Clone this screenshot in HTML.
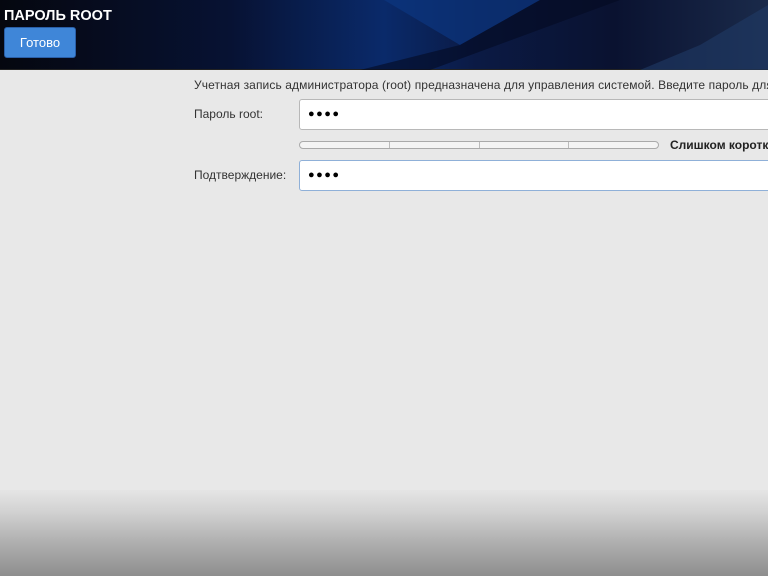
<!DOCTYPE html>
<html><head><meta charset="utf-8"><style>
*{margin:0;padding:0;box-sizing:border-box}
body{width:768px;height:576px;overflow:hidden;position:relative;background:#e8e8e8;font-family:"Liberation Sans","DejaVu Sans",sans-serif}
#hdr{position:absolute;left:0;top:0;width:768px;height:70px;background:linear-gradient(90deg,#05070f 0%,#071233 30%,#0a2a6a 50%,#0b1a44 62%,#0a1230 80%,#1a2a4a 100%);border-bottom:1px solid #222}
#hdr svg{position:absolute;left:0;top:0}
#title{position:absolute;left:4px;top:8px;color:#fff;font-weight:bold;font-size:14.5px}
#btn{position:absolute;left:4px;top:27px;width:72px;height:31px;background:#3f86d8;border:1px solid #2a5fa8;border-radius:3px;color:#fff;font-size:13px;text-align:center;line-height:29px}
.t{position:absolute;font-size:12px;color:#333;white-space:nowrap}
.in{position:absolute;left:299px;width:480px;height:31px;background:#fff;border:1px solid #b8b8b8;border-radius:3px}
.dots{position:absolute;left:8px;top:8px;font-size:11px;letter-spacing:1.5px;color:#000}
#bar{position:absolute;left:299px;top:141px;width:360px;height:8px;border:1px solid #aaa;border-radius:4px;background:#f4f4f4;display:flex}
#bar div{flex:1;border-right:1px solid #bbb}
#foot{position:absolute;left:0;top:490px;width:768px;height:86px;background:linear-gradient(#e5e5e5,#d2d2d2 25%,#b0b0b0 60%,#8e8e8e 100%)}
</style></head><body>
<div id="hdr"><svg width="768" height="70"><polygon points="384,0 540,0 460,45" fill="#0c3680" opacity=".7"/><polygon points="460,45 540,0 620,0 430,70 360,70" fill="#030a22" opacity=".6"/><polygon points="700,45 768,5 768,70 640,70" fill="#1f3a66" opacity=".6"/></svg>
<div id="title">ПАРОЛЬ ROOT</div>
<div id="btn">Готово</div></div>
<div class="t" style="left:194px;top:78px;letter-spacing:0.1px">Учетная запись администратора (root) предназначена для управления системой. Введите пароль для</div>
<div class="t" style="left:194px;top:107px">Пароль root:</div>
<div class="in" style="top:99px"><span class="dots">●●●●</span></div>
<div id="bar"><div></div><div></div><div></div><div style="border:none"></div></div>
<div class="t" style="left:670px;top:138px;font-weight:bold;color:#222">Слишком короткий</div>
<div class="t" style="left:194px;top:168px">Подтверждение:</div>
<div class="in" style="top:160px;border-color:#8fb0d8"><span class="dots">●●●●</span></div>
<div id="foot"></div>
</body></html>
